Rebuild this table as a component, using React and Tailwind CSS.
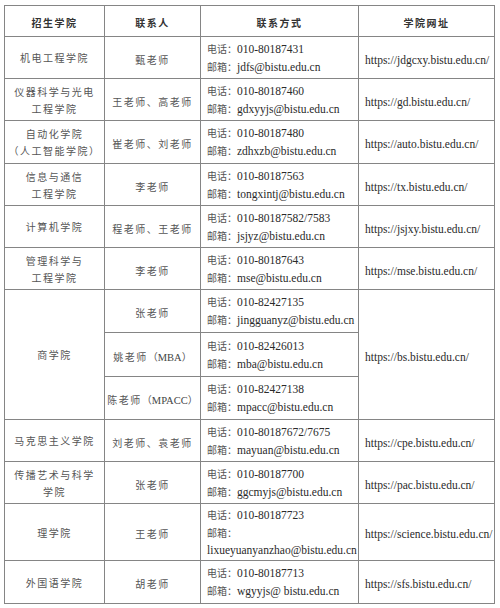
import React from "react";

const CN = "font-['Noto_Sans_CJK_SC',sans-serif]";
const LAT = "font-['Liberation_Serif','Noto_Sans_CJK_SC',serif]";

const rows = [
  { college: ["机电工程学院"], contact: "甄老师", tel: "010-80187431", mail: "jdfs@bistu.edu.cn", url: "https://jdgcxy.bistu.edu.cn/", h: "h-[42px]" },
  { college: ["仪器科学与光电", "工程学院"], contact: "王老师、高老师", tel: "010-80187460", mail: "gdxyyjs@bistu.edu.cn", url: "https://gd.bistu.edu.cn/", h: "h-[42px]" },
  { college: ["自动化学院", "（人工智能学院）"], contact: "崔老师、刘老师", tel: "010-80187480", mail: "zdhxzb@bistu.edu.cn", url: "https://auto.bistu.edu.cn/", h: "h-[43px]" },
  { college: ["信息与通信", "工程学院"], contact: "李老师", tel: "010-80187563", mail: "tongxintj@bistu.edu.cn", url: "https://tx.bistu.edu.cn/", h: "h-[42px]" },
  { college: ["计算机学院"], contact: "程老师、王老师", tel: "010-80187582/7583", mail: "jsjyz@bistu.edu.cn", url: "https://jsjxy.bistu.edu.cn/", h: "h-[42px]" },
  { college: ["管理科学与", "工程学院"], contact: "李老师", tel: "010-80187643", mail: "mse@bistu.edu.cn", url: "https://mse.bistu.edu.cn/", h: "h-[42px]" },
];

const business = [
  { contact: "张老师", tel: "010-82427135", mail: "jingguanyz@bistu.edu.cn", h: "h-[43px]" },
  { contact: "姚老师", tag: "MBA", tel: "010-82426013", mail: "mba@bistu.edu.cn", h: "h-[44px]" },
  { contact: "陈老师", tag: "MPACC", tel: "010-82427138", mail: "mpacc@bistu.edu.cn", h: "h-[43px]" },
];

const rows2 = [
  { college: ["马克思主义学院"], contact: "刘老师、袁老师", tel: "010-80187672/7675", mail: "mayuan@bistu.edu.cn", url: "https://cpe.bistu.edu.cn/", h: "h-[42px]" },
  { college: ["传播艺术与科学", "学院"], contact: "张老师", tel: "010-80187700", mail: "ggcmyjs@bistu.edu.cn", url: "https://pac.bistu.edu.cn/", h: "h-[42px]" },
  { college: ["理学院"], contact: "王老师", tel: "010-80187723", mail: "lixueyuanyanzhao@bistu.edu.cn", url: "https://science.bistu.edu.cn/", h: "h-[57px]", split: true },
  { college: ["外国语学院"], contact: "胡老师", tel: "010-80187713", mail: "wgyyjs@ bistu.edu.cn", url: "https://sfs.bistu.edu.cn/", h: "h-[43px]" },
];

const td = "border border-[#858585] p-0 align-middle";
const latText = `${LAT} text-[11.5px] leading-[17px] text-[#2a2a2a] whitespace-nowrap`;
const label = `${CN} text-[10px] text-[#555]`;
const cnText = `${CN} text-[10px] leading-[17px] tracking-[1.5px] text-[#555]`;

function College({ lines, rowSpan }) {
  return (
    <td rowSpan={rowSpan} className={`${td} text-center`}>
      {lines.map((l, i) => (
        <div key={i} className={cnText}>{l}</div>
      ))}
    </td>
  );
}

function Contact({ name, tag }) {
  return (
    <td className={`${td} text-center`}>
      <span className={`${cnText} whitespace-nowrap`}>
        {name}
        {tag && (
          <>
            <span className="tracking-normal">（</span>
            <span className={`${LAT} text-[10.5px] tracking-normal text-[#444]`}>{tag}</span>
            <span className="tracking-normal">）</span>
          </>
        )}
      </span>
    </td>
  );
}

function Info({ tel, mail, split }) {
  return (
    <td className={`${td} pl-[6px]`}>
      <div className={latText}>
        <span className={label}>电话：</span>{tel}
      </div>
      {split ? (
        <>
          <div className={latText}>
            <span className={label}>邮箱：</span>
          </div>
          <div className={latText}>{mail}</div>
        </>
      ) : (
        <div className={latText}>
          <span className={label}>邮箱：</span>{mail}
        </div>
      )}
    </td>
  );
}

function Url({ url, rowSpan }) {
  return (
    <td rowSpan={rowSpan} className={`${td} pl-[6px]`}>
      <span className={latText}>{url}</span>
    </td>
  );
}

function Row({ r }) {
  return (
    <tr className={r.h}>
      <College lines={r.college} />
      <Contact name={r.contact} />
      <Info tel={r.tel} mail={r.mail} split={r.split} />
      <Url url={r.url} />
    </tr>
  );
}

export default function App() {
  const head = `${CN} text-[10px] font-bold tracking-[1.5px] text-[#333]`;
  return (
    <div className="w-[500px] h-[608px] bg-white pt-[5px] pl-[4px]">
      <table className="table-fixed border-collapse w-[490px]">
        <colgroup>
          <col className="w-[100px]" />
          <col className="w-[96px]" />
          <col className="w-[158px]" />
          <col className="w-[136px]" />
        </colgroup>
        <tbody>
          <tr className="h-[31px]">
            <td className={`${td} text-center`}><span className={head}>招生学院</span></td>
            <td className={`${td} text-center`}><span className={head}>联系人</span></td>
            <td className={`${td} text-center`}><span className={head}>联系方式</span></td>
            <td className={`${td} text-center`}><span className={head}>学院网址</span></td>
          </tr>
          {rows.map((r, i) => <Row key={i} r={r} />)}
          {business.map((b, i) => (
            <tr key={`b${i}`} className={b.h}>
              {i === 0 && <College lines={["商学院"]} rowSpan={3} />}
              <Contact name={b.contact} tag={b.tag} />
              <Info tel={b.tel} mail={b.mail} />
              {i === 0 && <Url url="https://bs.bistu.edu.cn/" rowSpan={3} />}
            </tr>
          ))}
          {rows2.map((r, i) => <Row key={`r2${i}`} r={r} />)}
        </tbody>
      </table>
    </div>
  );
}
